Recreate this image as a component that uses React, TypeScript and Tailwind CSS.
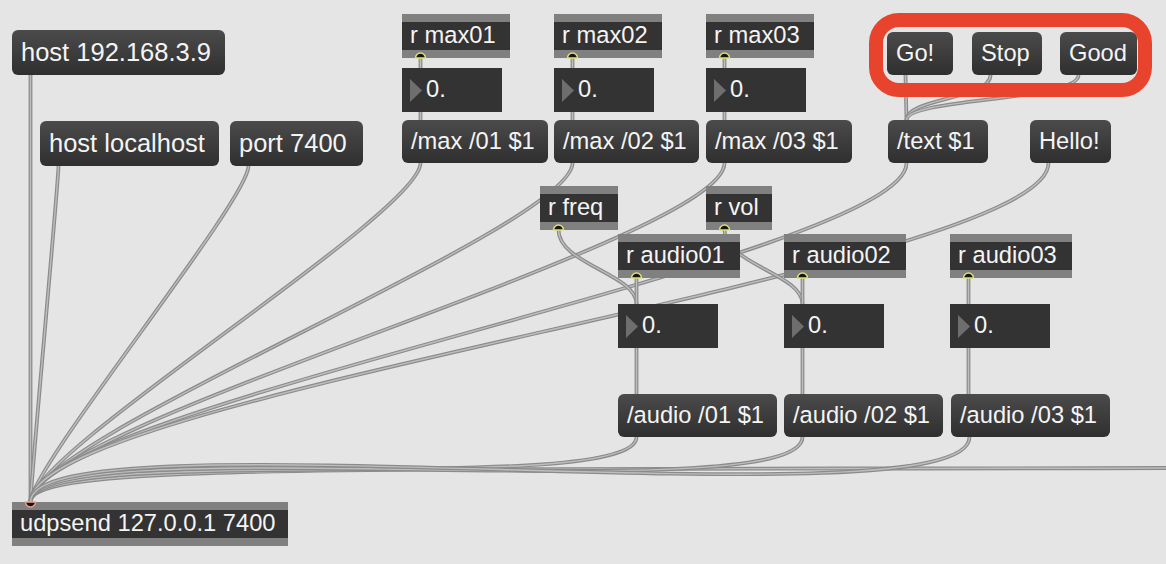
import React from "react";

const FONT = "font-['Liberation_Sans',Arial,Helvetica,sans-serif]";

function Msg({ className, children }: { className: string; children: React.ReactNode }) {
  return (
    <div
      className={`absolute flex items-center pl-[9px] rounded-[6px] bg-linear-to-b from-[#4b4b4b] to-[#2f2f2f] text-[#f4f4f4] whitespace-nowrap leading-none ${className}`}
    >
      {children}
    </div>
  );
}

function Obj({ className, children }: { className: string; children: React.ReactNode }) {
  return (
    <div className={`absolute flex flex-col h-[44px] ${className}`}>
      <div className="h-[8px] bg-[#808080]" />
      <div className="h-[28px] bg-[#333333] flex items-center pl-[8px] text-[23.7px] text-[#f4f4f4] whitespace-nowrap leading-none">
        {children}
      </div>
      <div className="h-[8px] bg-[#808080]" />
    </div>
  );
}

function Num({ className }: { className: string }) {
  return (
    <div className={`absolute h-[44px] w-[100px] bg-[#333333] flex items-center ${className}`}>
      <svg width="12" height="23" viewBox="0 0 12 23" className="ml-[8px] shrink-0">
        <polygon points="0,0 12,11.5 0,23" fill="#6e6e6e" />
      </svg>
      <span className="ml-[4px] text-[23.7px] text-[#f4f4f4] leading-none">0.</span>
    </div>
  );
}

const UX = 30.5;
const UY = 502;

function cord(x1: number, y1: number, x2: number, y2: number, k1?: number, k2?: number) {
  const dx = Math.abs(x2 - x1);
  const dy = Math.abs(y2 - y1);
  const k = k1 ?? 0.09 * dx + 0.03 * dy + 5;
  const kk = k2 ?? k;
  return `M${x1} ${y1} C${x1} ${y1 + k} ${x2} ${y2 - kk} ${x2} ${y2}`;
}

const cords: string[] = [
  // off-screen cable from the right
  `M1175 468 C300 470 ${UX} 464 ${UX} ${UY}`,
  // to udpsend
  `M${UX} 75 L${UX} ${UY}`,
  cord(58.5, 166, UX, UY),
  cord(248.5, 166, UX, UY),
  cord(420.5, 163, UX, UY),
  cord(572.5, 163, UX, UY),
  cord(724.5, 163, UX, UY),
  cord(906.5, 163, UX, UY),
  cord(1048.5, 163, UX, UY),
  cord(636.5, 437, UX, UY),
  cord(802.5, 437, UX, UY),
  cord(969.5, 437, UX, UY),
  // r max -> number -> message
  `M420.5 58 L420.5 68`,
  `M420.5 112 L420.5 120`,
  `M572.5 58 L572.5 68`,
  `M572.5 112 L572.5 120`,
  `M724.5 58 L724.5 68`,
  `M724.5 112 L724.5 120`,
  // Go / Stop / Good -> /text
  `M905.5 75 L906.5 120`,
  cord(990.5, 75, 906.5, 120, 24, 22),
  cord(1078.5, 75, 906.5, 120, 26, 22),
  // r freq / r vol
  cord(558.5, 230, 636.5, 304, 34, 30),
  cord(724.5, 230, 802.5, 304, 34, 30),
  // r audio -> numbers -> messages
  `M636.5 278 L636.5 304`,
  `M802.5 278 L802.5 304`,
  `M968.5 278 L968.5 304`,
  `M636.5 348 L636.5 394`,
  `M802.5 348 L802.5 394`,
  `M968.5 348 L968.5 394`,
];

const outlets = [420.5, 572.5, 724.5].map((x) => [x, 58] as const).concat([
  [558.5, 230],
  [724.5, 230],
  [636.5, 278],
  [802.5, 278],
  [968.5, 278],
]);

export default function App() {
  return (
    <div className={`relative w-[1166px] h-[564px] overflow-hidden bg-[#e5e5e5] ${FONT}`}>
      <svg className="absolute inset-0" width="1166" height="564" viewBox="0 0 1166 564">
        {cords.map((d, i) => (
          <g key={i} fill="none" strokeLinecap="round">
            <path d={d} stroke="#8b8b8b" strokeWidth={3.8} />
            <path d={d} stroke="#bdbdbd" strokeWidth={1.4} />
          </g>
        ))}
      </svg>

      {/* message boxes */}
      <Msg className="left-[12px] top-[30px] w-[213px] h-[45px] text-[25.5px]">host 192.168.3.9</Msg>
      <Msg className="left-[40px] top-[121px] w-[179px] h-[45px] text-[25.5px]">host localhost</Msg>
      <Msg className="left-[230px] top-[121px] w-[133px] h-[45px] text-[25.5px]">port 7400</Msg>

      <Msg className="left-[402px] top-[120px] w-[146px] h-[43px] text-[23.7px]">/max /01 $1</Msg>
      <Msg className="left-[554px] top-[120px] w-[145px] h-[43px] text-[23.7px]">/max /02 $1</Msg>
      <Msg className="left-[706px] top-[120px] w-[146px] h-[43px] text-[23.7px]">/max /03 $1</Msg>

      <Msg className="left-[887px] top-[32px] w-[66px] h-[43px] text-[23.7px]">Go!</Msg>
      <Msg className="left-[972px] top-[32px] w-[70px] h-[43px] text-[23.7px]">Stop</Msg>
      <Msg className="left-[1060px] top-[32px] w-[77px] h-[43px] text-[23.7px]">Good</Msg>

      <Msg className="left-[888px] top-[120px] w-[100px] h-[43px] text-[23.7px]">/text $1</Msg>
      <Msg className="left-[1030px] top-[120px] w-[81px] h-[43px] text-[23.7px]">Hello!</Msg>

      <Msg className="left-[618px] top-[394px] w-[159px] h-[43px] text-[23.7px]">/audio /01 $1</Msg>
      <Msg className="left-[784px] top-[394px] w-[159px] h-[43px] text-[23.7px]">/audio /02 $1</Msg>
      <Msg className="left-[951px] top-[394px] w-[159px] h-[43px] text-[23.7px]">/audio /03 $1</Msg>

      {/* object boxes */}
      <Obj className="left-[402px] top-[14px] w-[108px]">r max01</Obj>
      <Obj className="left-[554px] top-[14px] w-[108px]">r max02</Obj>
      <Obj className="left-[706px] top-[14px] w-[108px]">r max03</Obj>
      <Obj className="left-[540px] top-[186px] w-[78px]">r freq</Obj>
      <Obj className="left-[706px] top-[186px] w-[66px]">r vol</Obj>
      <Obj className="left-[618px] top-[234px] w-[122px]">r audio01</Obj>
      <Obj className="left-[784px] top-[234px] w-[122px]">r audio02</Obj>
      <Obj className="left-[950px] top-[234px] w-[122px]">r audio03</Obj>
      <Obj className="left-[12px] top-[502px] w-[276px]">udpsend 127.0.0.1 7400</Obj>

      {/* number boxes */}
      <Num className="left-[402px] top-[68px]" />
      <Num className="left-[554px] top-[68px]" />
      <Num className="left-[706px] top-[68px]" />
      <Num className="left-[618px] top-[304px]" />
      <Num className="left-[784px] top-[304px]" />
      <Num className="left-[950px] top-[304px]" />

      {/* ports */}
      <svg className="absolute inset-0 pointer-events-none" width="1166" height="564" viewBox="0 0 1166 564">
        {outlets.map(([x, y], i) => (
          <path
            key={i}
            d={`M${x - 5} ${y} A5 5 0 0 1 ${x + 5} ${y} Z`}
            fill="#151515"
            stroke="#dede74"
            strokeWidth={1.5}
          />
        ))}
        <path d={`M${UX - 5} ${UY} A5 5 0 0 0 ${UX + 5} ${UY} Z`} fill="#151515" stroke="#e8a28c" strokeWidth={1.5} />
      </svg>

      {/* highlight */}
      <div className="absolute left-[869px] top-[13px] w-[283px] h-[84px] border-[14px] border-[#e8432c] rounded-[30px]" />
    </div>
  );
}
